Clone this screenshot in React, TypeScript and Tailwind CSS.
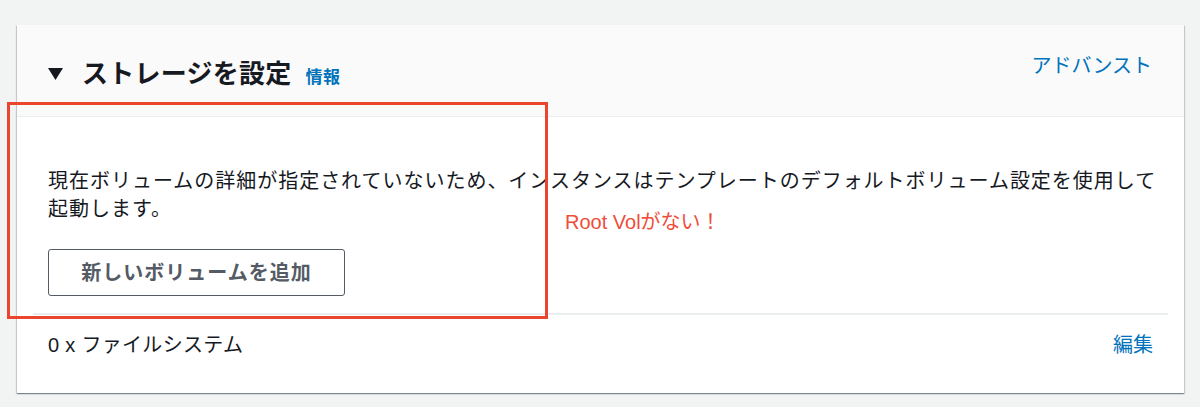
const font = '[font-family:"Liberation_Sans","Noto_Sans_CJK_JP",sans-serif]';

function Triangle() {
  return (
    <svg width="15" height="12" viewBox="0 0 15 12" className="shrink-0">
      <polygon points="0,0 15,0 7.5,12" fill="#16191f" />
    </svg>
  );
}

export default function App() {
  return (
    <div className={`relative min-h-[407px] w-[1200px] bg-[#f2f3f3] pl-[17px] pt-[25px] ${font}`}>
      <div className="w-[1167px] h-[368px] bg-white shadow-[0_1px_1px_0_rgba(0,28,36,0.3),1px_1px_1px_0_rgba(0,28,36,0.15),-1px_1px_1px_0_rgba(0,28,36,0.15)]">
        {/* ヘッダー */}
        <div className="flex h-[92px] justify-between border-b border-[#eaeded] bg-[#fafafa] pl-[31px] pr-[32px]">
          <div className="flex items-center gap-[19px] pt-[31px] self-start h-[67px]">
            <Triangle />
            <div className="flex items-baseline">
              <h2 className="text-[26px] leading-[36px] font-bold tracking-[0.25px] text-[#16191f]">ストレージを設定</h2>
              <span className="ml-[14px] text-[17px] font-bold tracking-[0.5px] text-[#0073bb]">情報</span>
            </div>
          </div>
          <span className="mt-[27px] text-[20px] leading-[28px] text-[#0073bb]">アドバンスト</span>
        </div>

        {/* 本文 */}
        <div className="pl-[31px] pt-[50px] pb-[17px]">
          <p className="text-[20px] leading-[28px] tracking-[0.98px] text-[#16191f]">
            現在ボリュームの詳細が指定されていないため、インスタンスはテンプレートのデフォルトボリューム設定を使用して
            <br />
            起動します。
          </p>
          <button className="mt-[26px] flex h-[47px] w-[297px] items-center justify-center rounded-[3px] border border-[#545b64] bg-white text-[20px] font-bold tracking-[1px] text-[#545b64]">
            新しいボリュームを追加
          </button>
        </div>

        <div className="mx-[16px] border-t-2 border-[#eaeded]" />

        {/* フッター */}
        <div className="flex justify-between pl-[31px] pr-[31px] pt-[16px]">
          <span className="text-[20px] leading-[28px] tracking-[0.3px] text-[#16191f]">0 x ファイルシステム</span>
          <span className="text-[20px] leading-[28px] text-[#0073bb]">編集</span>
        </div>
      </div>

      {/* 注釈 */}
      <div className="absolute left-[7px] top-[102px] h-[217px] w-[541px] border-[3px] border-[#e9452f]" />
      <span className="absolute left-[565px] top-[208px] text-[20px] leading-[28px] text-[#ee4e3a]">
        Root Volがない！
      </span>
    </div>
  );
}
